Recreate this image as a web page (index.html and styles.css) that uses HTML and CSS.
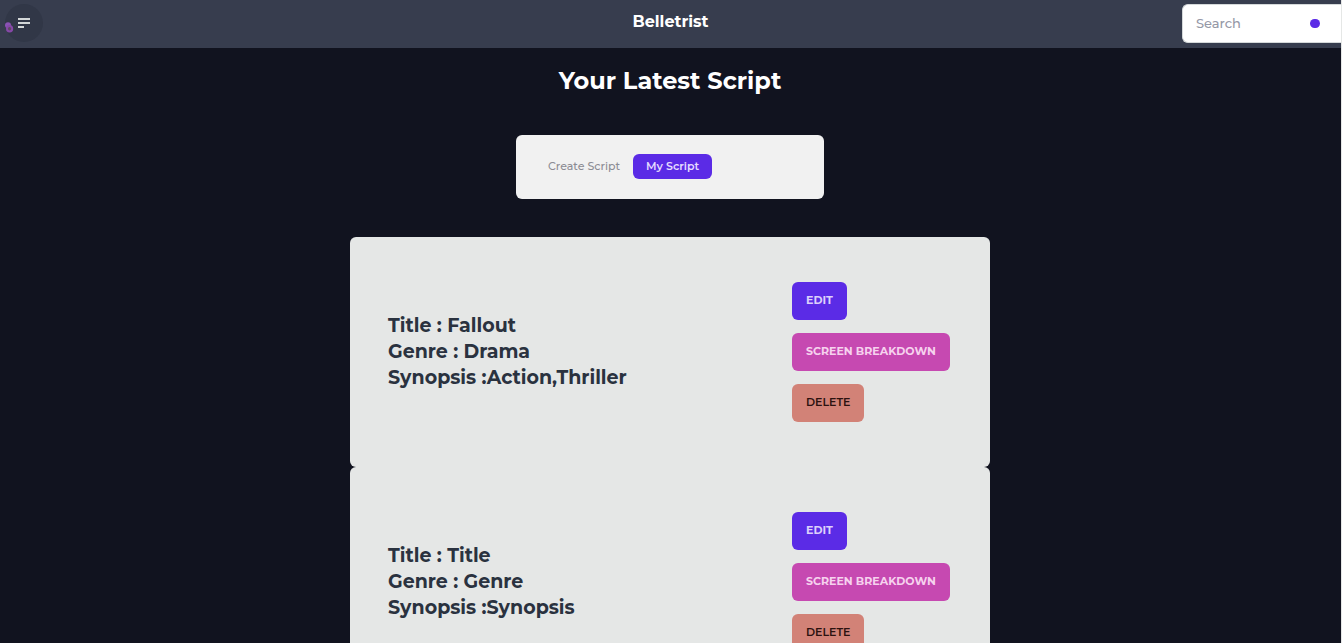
FILE: index.html
```html
<!DOCTYPE html>
<html lang="en">
<head>
<meta charset="utf-8">
<title>Belletrist</title>
<link rel="stylesheet" href="styles.css">
</head>
<body>
<header class="navbar">
  <div class="navbar-start">
    <button class="menu-button" type="button" aria-label="Open menu">
      <svg class="menu-icon" viewBox="0 0 13 11" aria-hidden="true"><path d="M0 1h12M0 5h12M0 9h6" fill="none" stroke="currentColor" stroke-width="2"/></svg>
      <svg class="menu-mark" viewBox="0 0 10 12" aria-hidden="true"><circle cx="3" cy="3.2" r="3" fill="#8a52b4"/><ellipse cx="4.6" cy="6.8" rx="2.6" ry="2.8" fill="#5d4a62" stroke="#8648a8" stroke-width="2"/></svg>
    </button>
  </div>
  <a class="brand" href="#">Belletrist</a>
  <form class="navbar-end">
    <input class="search-input" type="search" placeholder="Search" aria-label="Search">
    <button class="search-button" type="submit" aria-label="Submit search"></button>
  </form>
</header>
<main class="page">
  <h1 class="page-title">Your Latest Script</h1>
  <nav class="tabs">
    <a class="tab" href="#">Create Script</a>
    <a class="tab tab-active" href="#">My Script</a>
  </nav>
  <section class="scripts">
    <article class="card">
      <h2 class="card-title">Title : Fallout<br>Genre : Drama<br>Synopsis :Action,Thriller</h2>
      <div class="card-actions">
        <button class="btn btn-primary" type="button">EDIT</button>
        <button class="btn btn-secondary" type="button">SCREEN BREAKDOWN</button>
        <button class="btn btn-danger" type="button">DELETE</button>
      </div>
    </article>
    <article class="card">
      <h2 class="card-title">Title : Title<br>Genre : Genre<br>Synopsis :Synopsis</h2>
      <div class="card-actions">
        <button class="btn btn-primary" type="button">EDIT</button>
        <button class="btn btn-secondary" type="button">SCREEN BREAKDOWN</button>
        <button class="btn btn-danger" type="button">DELETE</button>
      </div>
    </article>
  </section>
</main>
</body>
</html>
```
FILE: styles.css
```css
* { box-sizing: border-box; }
html { background: #11131f; scrollbar-width: none; }
body {
  margin: 0;
  border-right: 1px solid #e5e7e6;
  background: #11131f;
  font-family: Montserrat, Inter, "Open Sans", sans-serif;
}
.navbar {
  display: grid;
  grid-template-columns: 1fr auto 1fr;
  align-items: center;
  height: 48px;
  padding-right: 0;
  background: #373d4e;
}
.navbar-start { padding-left: 5px; }
.menu-button {
  position: relative;
  display: grid;
  place-items: center;
  width: 38px;
  height: 38px;
  margin-bottom: 2px;
  padding: 0;
  border: 0;
  border-radius: 50%;
  background: #313747;
  color: #d3d7d8;
}
.menu-icon { width: 13px; height: 11px; }
.menu-mark { position: absolute; left: 0; top: 18px; width: 10px; height: 12px; }
.brand {
  padding-bottom: 4px;
  color: #fff;
  font-size: 16px;
  line-height: 20px;
  font-weight: 700;
  text-decoration: none;
}
.navbar-end {
  display: flex;
  align-items: center;
  justify-self: end;
  width: 159px;
  height: 39px;
  margin-bottom: 2px;
  padding: 0 21px 0 13px;
  border: 1px solid #d5d9da;
  border-right: 0;
  border-radius: 6px 0 0 6px;
  background: #fff;
}
.search-input {
  flex: 1;
  min-width: 0;
  padding: 0;
  border: 0;
  outline: 0;
  background: transparent;
  font: 500 13px/20px Montserrat, Inter, sans-serif;
  color: #2a323c;
}
.search-input::placeholder { color: #9598a6; opacity: 1; }
.search-button {
  width: 10px;
  height: 9px;
  padding: 0;
  border: 0;
  border-radius: 5px;
  background: #5b2be6;
}
.page {
  display: flex;
  flex-direction: column;
  align-items: center;
  padding: 17px 1px 0 0;
}
.page-title {
  margin: 0 0 38px;
  color: #fff;
  font-size: 24px;
  line-height: 32px;
  font-weight: 700;
}
.tabs {
  display: flex;
  align-items: center;
  width: 308px;
  max-width: 100%;
  margin-bottom: 38px;
  padding: 19px 19px 20px;
  border-radius: 6px;
  background: #f1f1f1;
}
.tab {
  padding: 0 13px;
  border-radius: 6px;
  color: #8c8c94;
  font-size: 11px;
  line-height: 25px;
  font-weight: 500;
  text-decoration: none;
}
.tab-active { background: #5b2be6; color: #e5dcff; font-weight: 600; }
.scripts { width: 640px; max-width: 100%; }
.card {
  display: flex;
  align-items: center;
  justify-content: space-between;
  padding: 45px 39px 45px 38px;
  border-radius: 6px;
  background: #e5e7e6;
}
.card-title {
  margin: 0;
  color: #2a323f;
  font-size: 19px;
  line-height: 26px;
  font-weight: 700;
}
.card-actions {
  display: flex;
  flex-direction: column;
  align-items: flex-start;
  gap: 13px;
  width: 159px;
}
.btn {
  height: 38px;
  padding: 0 14px 2px;
  border: 0;
  border-radius: 6px;
  font: 700 11px/14px Montserrat, Inter, sans-serif;
  white-space: nowrap;
}
.btn-primary { background: #5b2be6; color: #dcd0fb; }
.btn-secondary { background: #c649b1; color: #f6d2ee; }
.btn-danger { background: #d28277; color: #2c1210; font-weight: 600; }
```
